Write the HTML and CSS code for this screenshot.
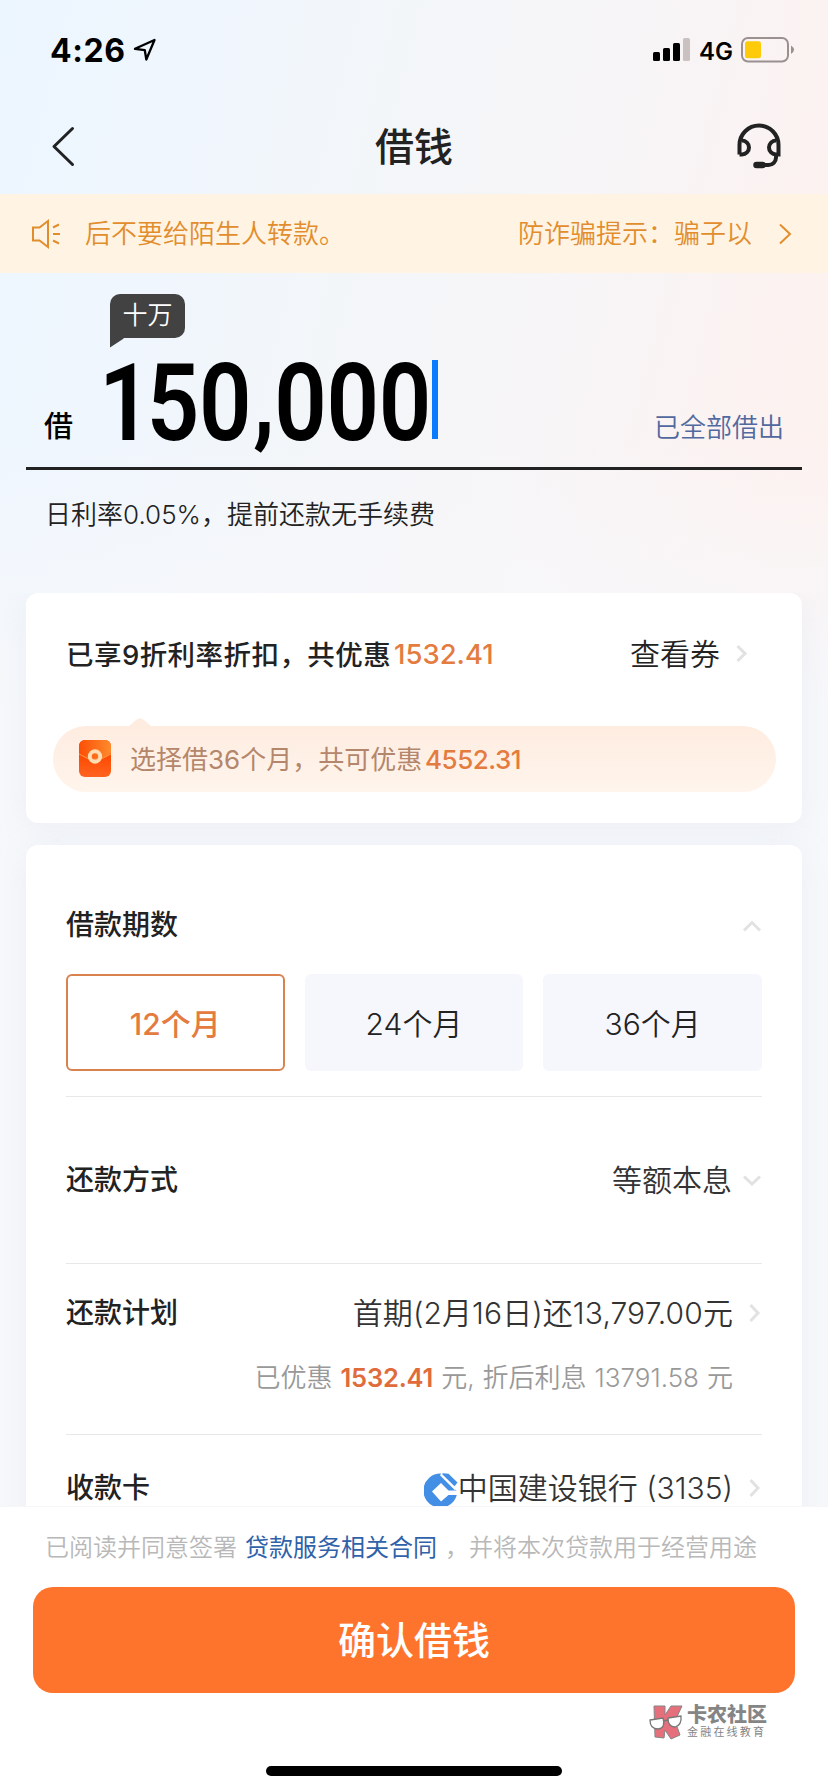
FILE: index.html
```html
<!DOCTYPE html>
<html lang="zh-CN">
<head>
<meta charset="utf-8">
<title>借钱</title>
<link rel="stylesheet" href="styles.css">
</head>
<body>
<div class="screen">
  <header class="status">
    <span class="time">4:26</span>
    <svg class="locate" width="24" height="24" viewBox="0 0 24 24"><path d="M2 10.8 21.5 2 13.3 21.5 11.8 12.2Z" fill="none" stroke="#000" stroke-width="2.3" stroke-linejoin="round"/></svg>
    <svg class="signal" width="38" height="24" viewBox="0 0 38 24"><rect x="0" y="14" width="7" height="9" rx="1.5"/><rect x="10" y="10" width="7" height="13" rx="1.5"/><rect x="20" y="5" width="7" height="18" rx="1.5"/><rect x="30" y="0" width="7" height="23" rx="1.5" fill="#cac2c1"/></svg>
    <span class="network">4G</span>
    <svg class="battery" width="54" height="26" viewBox="0 0 54 26"><rect x="1" y="1" width="46" height="23.5" rx="6" fill="none" stroke="#9a908f" stroke-width="2"/><rect x="4" y="4.3" width="16" height="17" rx="2.5" fill="#fdcb0a"/><path d="M50 8.5q6 4.2 0 8.6z" fill="#9a908f"/></svg>
  </header>
  <nav class="nav">
    <svg class="back" width="26" height="42" viewBox="0 0 26 42"><path d="M22.5 2.5 4 20.5 22.5 38.500" fill="none" stroke="#222" stroke-width="3" stroke-linecap="round" stroke-linejoin="round"/></svg>
    <h1 class="title">借钱</h1>
    <svg class="service" width="46" height="48" viewBox="0 0 46 48"><path d="M3.500 31.500V22a19.500 19.500 0 0 1 39 0V31.500H40a7 7 0 0 1 0-14M3.500 31.500H6a7 7 0 0 0 0-14M40 32v2.500a7.500 7.500 0 0 1-7.500 7.500H27" fill="none" stroke="#222" stroke-width="4"/><path d="M20.500 42h6" stroke="#222" stroke-width="6.500" stroke-linecap="round"/></svg>
  </nav>
  <div class="notice">
    <svg class="horn" width="30" height="30" viewBox="0 0 30 30"><path d="M2 8.500H8.500L17 2v26L8.500 21.500H2ZM22 8.500 28 5.500M22 15h7M22 21.500l6 3" fill="none" stroke="#e28d2d" stroke-width="2"/></svg>
    <div class="marquee"><span>后不要给陌生人转款。</span><span class="tip">防诈骗提示：骗子以</span></div>
    <svg class="more" width="14" height="24" viewBox="0 0 14 24"><path d="M2 2.500 12 12 2 21.500" fill="none" stroke="#e28d2d" stroke-width="2"/></svg>
  </div>
  <section class="amount">
    <div class="unit">十万<svg class="tail" width="16" height="12" viewBox="0 0 16 12"><path d="M0 0H16L13 3 0 11.500Z" fill="#424242"/></svg></div>
    <span class="borrow">借</span>
    <span class="number"><span class="lead">1</span>50<span class="sep">,</span>000</span>
    <span class="caret"></span>
    <span class="all">已全部借出</span>
  </section>
  <p class="rate">日利率0.05%，提前还款无手续费</p>
  <main class="cards">
    <section class="card discount">
      <div class="discount-head">
        <span class="discount-text">已享9折利率折扣，共优惠</span><b class="saved">1532.41</b>
        <span class="coupon">查看券</span>
        <svg class="arrow" width="14" height="20" viewBox="0 0 14 20"><path d="M2.500 2 10 9.500 2.500 17" class="chev"/></svg>
      </div>
      <div class="pill">
        <svg class="notch" width="24" height="9" viewBox="0 0 24 9"><path d="M0 9 8 2q4-3.500 8 0L24 9Z" fill="#feece0"/></svg>
        <svg class="packet" width="32" height="38" viewBox="0 0 32 38"><defs><linearGradient id="flap" x1="0" y1="0" x2="1" y2="0"><stop offset="0" stop-color="#fd4e05"/><stop offset="1" stop-color="#ff8b2c"/></linearGradient><linearGradient id="base" x1="0" y1="0" x2="0" y2="1"><stop offset=".4" stop-color="#fe4900"/><stop offset="1" stop-color="#ff6420"/></linearGradient></defs><rect x="0" y="0" width="32" height="37" rx="6" fill="url(#base)"/><path d="M6 0H26a6 6 0 0 1 6 6V13Q16 26 0 14V6A6 6 0 0 1 6 0Z" fill="url(#flap)"/><path d="M0 14Q16 25 32 14" fill="none" stroke="#ff9a4a" stroke-width="1"/><circle cx="16" cy="16.500" r="5.200" fill="none" stroke="#ffdcb2" stroke-width="4"/></svg>
        <span class="pill-text">选择借36个月，共可优惠</span><b class="pill-saved">4552.31</b>
      </div>
    </section>
    <section class="card details">
      <div class="row terms"><span class="label">借款期数</span><svg width="20" height="14" viewBox="0 0 20 14"><path d="M2 11.500 10 3.500l8 8" class="chev"/></svg></div>
      <div class="options"><span class="option chosen">12个月</span><span class="option">24个月</span><span class="option">36个月</span></div>
      <div class="row method"><span class="label">还款方式</span><span class="value">等额本息</span><svg width="20" height="14" viewBox="0 0 20 14"><path d="M2 3.500 10 11l8-7.500" class="chev"/></svg></div>
      <div class="plan">
        <div class="row first"><span class="label">还款计划</span><span class="value due">首期(2月16日)还13,797.00元</span><svg class="end" width="14" height="20" viewBox="0 0 14 20"><path d="M2.500 2 10 10 2.500 18" class="chev"/></svg></div>
        <div class="interest">已优惠 <b>1532.41</b> 元, 折后利息 13791.58 元</div>
      </div>
      <div class="row account"><span class="label">收款卡</span>
        <svg class="bank" width="34" height="36" viewBox="0 0 34 36"><path d="M17 .6A17 17 0 1 0 32.800 22H24.500L17 28.500 8 18.500 17 10 24.500 17.500H32.500L16.500 1.500Z" fill="#438fe6"/><path d="M19 .3 24.500 .8 33.500 9.500 30.500 13.300 18 1Z" fill="#438fe6"/><path d="M16.500 1.800 31.500 16.800" stroke="#fff" stroke-width="1.500"/></svg>
        <span class="value card-name">中国建设银行 (3135)</span><svg class="end" width="14" height="20" viewBox="0 0 14 20"><path d="M2.500 2 10 10 2.500 18" class="chev"/></svg></div>
    </section>
  </main>
  <footer class="footer">
    <p class="agree">已阅读并同意签署<a>贷款服务相关合同</a><span class="comma">，</span><span>并将本次贷款用于经营用途</span></p>
    <button class="confirm">确认借钱</button>
    <div class="brand">
      <svg width="34" height="36" viewBox="0 0 34 36"><path d="M5 1H16V10L22 1H33L26 16 31 30 22 34 16 25 15 33 6 32Z" fill="#e66f7c" stroke="#858585"/><path d="M1 15 14 13Q17 23 9 24 1 24 1 15ZM19 13 32 11Q33 20 26 22 19 22 19 13ZM14 16 19 15" fill="#fff" stroke="#777" stroke-width="1.300"/></svg>
      <div class="brand-text"><strong>卡农社区</strong><small>金融在线教育</small></div>
    </div>
    <div class="home"></div>
  </footer>
</div>
</body>
</html>
```
FILE: styles.css
```css
* { box-sizing: border-box; }
body { margin: 0; font-family: Inter, "Noto Sans CJK SC", sans-serif; color: #222; }
svg { flex: none; display: block; }
h1, p { margin: 0; }
b { font-weight: 500; }
span { white-space: nowrap; }
.screen { width: 828px; height: 1792px; overflow: hidden; display: flex; flex-direction: column;
  background: linear-gradient(180deg, rgba(247,248,251,0) 440px, #f7f8fb 700px), linear-gradient(104deg, #ecf6ff 0%, #f0f6fd 18%, #f3f6f9 32%, #f7f5f7 50%, #fcf2f0 70%, #fdf0ee 100%); }
.status { height: 100px; flex: none; display: flex; align-items: center; padding: 0 34px 0 50px; color: #000; }
.time { font-size: 32px; font-weight: 700; letter-spacing: .6px; width: 83px; }
.signal { margin-left: auto; }
.network { font-size: 24px; font-weight: 600; width: 42px; margin-left: 8px; margin-top: 2px; }
.battery { margin-right: -1px; }
.nav { height: 94px; flex: none; display: flex; align-items: center; padding: 0 46px 0 50px; }
.back { margin-right: 299px; margin-top: -1px; }
.service { margin-left: auto; }
.title { font-size: 39px; font-weight: 500; line-height: 60px; }
.notice { height: 79px; flex: none; background: #fff4e3; display: flex; align-items: center; padding: 0 36px 0 31px; color: #e28d2d; font-size: 26px; font-weight: 350; }
.marquee { width: 666px; margin-left: 24px; margin-right: auto; overflow: hidden; display: flex; line-height: 40px; }
.tip { margin-left: 173px; }
.amount { height: 197px; flex: none; margin: 0 26px; border-bottom: 3px solid #222; display: flex; align-items: flex-end; position: relative; color: #000; }
.unit { position: absolute; left: 84px; top: 21px; width: 75px; height: 44px; border-radius: 10px 10px 10px 0; background: #424242; color: #fff; font-size: 25px; font-weight: 350; line-height: 43px; text-align: center; }
.tail { position: absolute; left: 0; top: 42px; }
.borrow { font-size: 29px; font-weight: 500; line-height: 40px; margin: 0 0 20px 18px; width: 55px; flex: none; }
.number { font-family: Roboto, sans-serif; font-size: 107px; font-weight: 600; line-height: 110px; letter-spacing: -.4px; width: 333px; flex: none; margin-bottom: 8px; transform: scaleX(.86); transform-origin: 0 50%; }
.lead { letter-spacing: -5.500px; }
.sep { display: inline-block; transform: translate(2px, -5px); margin-right: 2px; }
.caret { width: 6px; height: 79px; flex: none; background: #0a7aff; margin-bottom: 28px; }
.all { margin: 0 18px 19px auto; color: #51699f; font-size: 26px; font-weight: 350; line-height: 40px; }
.rate { font-size: 26px; font-weight: 350; line-height: 40px; margin: 25px 0 58px 45px; height: 40px; flex: none; }
.cards { flex: 1; min-height: 0; overflow: hidden; padding: 0 26px; }
.card { background: #fff; border-radius: 12px; box-shadow: 0 6px 30px rgba(200,208,228,.22); }
.discount { height: 230px; padding: 0 27px; }
.discount-head { height: 133px; display: flex; align-items: center; padding: 0 26px 12px 13px; font-size: 27.500px; }
.discount-text { font-weight: 500; width: 328px; letter-spacing: .45px; padding-bottom: 2px; }
.saved { color: #e47b3f; }
.coupon { margin-left: auto; margin-right: 15px; font-size: 30px; font-weight: 350; padding-bottom: 4px; }
.chev { fill: none; stroke: #e2e2e2; stroke-width: 3; }
.pill { height: 66px; border-radius: 33px; background: linear-gradient(#feece0, #fff5ec); display: flex; align-items: center; padding-left: 26px; position: relative; color: #b4866b; font-size: 26px; margin-right: -1px; }
.notch { position: absolute; left: 75px; top: -8px; }
.pill-text { margin-left: 19px; width: 295px; padding-bottom: 3px; }
.pill-saved { color: #e47b3f; letter-spacing: -.5px; }
.details { margin-top: 22px; height: 800px; padding: 0 40px; }
.row { display: flex; align-items: center; }
.label { font-size: 28px; font-weight: 500; margin-right: auto; padding-bottom: 5px; }
.value { font-size: 30px; font-weight: 350; margin-right: 10px; color: #333; padding-bottom: 5px; }
.terms { height: 129px; padding-top: 32px; }
.options { display: grid; grid-template-columns: repeat(3, 1fr); gap: 20px; height: 123px; padding-bottom: 25px; border-bottom: 1px solid #e8e8e8; }
.option { display: flex; align-items: center; justify-content: center; border-radius: 6px; background: #f6f7fc; font-size: 30px; font-weight: 350; padding-bottom: 2px; }
.chosen { border: 2px solid #d9824f; background: #fff; color: #e47b3f; font-weight: 500; }
.method { height: 167px; border-bottom: 1px solid #e8e8e8; }
.plan { height: 171px; border-bottom: 1px solid #e8e8e8; padding-top: 26px; }
.first { height: 46px; }
.end { margin: 0 0 0 6px; }
.value:has(+ .end) { margin-right: 9px; }
.due { letter-spacing: .1px; }
.interest { margin: 22px 29px 0 0; text-align: right; font-size: 26px; font-weight: 350; line-height: 40px; color: #999; white-space: nowrap; word-spacing: .7px; }
.interest b { color: #e06c3c; font-weight: 600; font-size: 25.500px; letter-spacing: -.2px; }
.account { height: 106px; }
.bank { margin-top: 6px; }
.footer { height: 286px; flex: none; background: #fff; border-top: 1px solid #f6f6f8; padding: 0 33px; display: flex; flex-direction: column; }
.agree { padding: 0 0 4px 12px; height: 80px; flex: none; display: flex; align-items: center; font-size: 24px; font-weight: 350; color: #b8b8b8; }
.agree a { color: #2f62a8; font-weight: 400; margin-left: 8px; }
.comma { width: 24px; margin-left: 8px; }
.confirm { border: 0; padding: 0; height: 106px; border-radius: 20px; background: #ff742c; color: #fff; font: 500 38px/100px Inter, "Noto Sans CJK SC", sans-serif; flex: none; }
.brand { align-self: flex-end; display: flex; gap: 4px; margin: 12px 28px 0 0; height: 36px; flex: none; color: #858585; }
.brand-text { display: flex; flex-direction: column; }
.brand strong { font-size: 20px; line-height: 21px; font-weight: 900; }
.brand small { font-size: 11px; line-height: 13px; letter-spacing: 2.200px; white-space: nowrap; }
.home { width: 296px; height: 10px; border-radius: 5px; background: #000; margin: 25px auto 0; }
```
